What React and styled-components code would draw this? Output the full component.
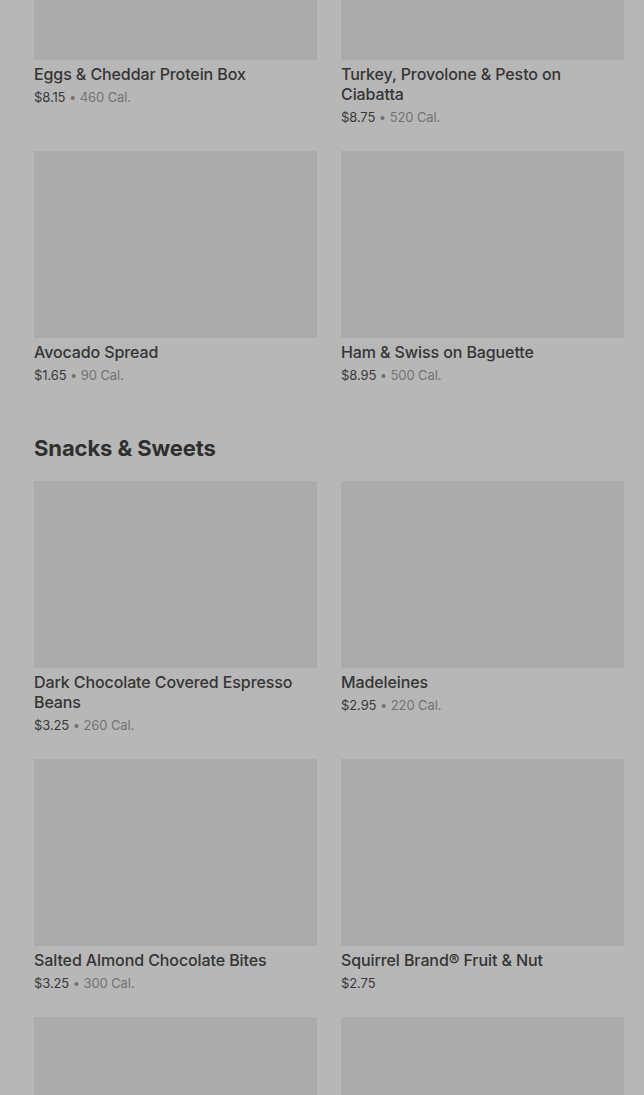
import React from "react";
import styled, { createGlobalStyle } from "styled-components";

const GlobalStyle = createGlobalStyle`
    html, body {
        margin: 0;
        padding: 0;
        background: #b7b7b7;
        overflow: hidden;
    }
    body {
        font-family: Inter, "Liberation Sans", Arial, sans-serif;
    }
`

const Page = styled.main`
    background: #b7b7b7;
    padding: 0 20px 0 34px;
    margin-top: -127px;
    height: 1222px;
    overflow: hidden;
`
const Section = styled.section`
    display: flex;
    flex-direction: column;
`
const SectionTitle = styled.h2`
    margin: 49px 0 19px;
    font-size: 22px;
    line-height: 28px;
    font-weight: 700;
    letter-spacing: -0.1px;
    color: #2f2f2f;
`
const Grid = styled.div`
    display: grid;
    grid-template-columns: 1fr 1fr;
    column-gap: 24px;
    row-gap: 24px;
`
const Card = styled.div`
    display: flex;
    flex-direction: column;
`
const Thumb = styled.div`
    height: 187px;
    background: #ababab;
    margin-bottom: 4px;
`
const Name = styled.div`
    font-size: 16px;
    line-height: 20px;
    font-weight: 500;
    letter-spacing: -0.1px;
    color: #353535;
`
const Meta = styled.div`
    margin-top: 3px;
    font-size: 13px;
    line-height: 20px;
    letter-spacing: -0.1px;
    color: #3a3a3a;
`
const Cal = styled.span`
    color: #737373;
`

const top = [
    { name: "Eggs & Cheddar Protein Box", price: "$8.15", cal: "460 Cal." },
    { name: "Turkey, Provolone & Pesto on Ciabatta", price: "$8.75", cal: "520 Cal." },
    { name: "Avocado Spread", price: "$1.65", cal: "90 Cal." },
    { name: "Ham & Swiss on Baguette", price: "$8.95", cal: "500 Cal." },
]

const snacks = [
    { name: "Dark Chocolate Covered Espresso Beans", price: "$3.25", cal: "260 Cal." },
    { name: "Madeleines", price: "$2.95", cal: "220 Cal." },
    { name: "Salted Almond Chocolate Bites", price: "$3.25", cal: "300 Cal." },
    { name: "Squirrel Brand® Fruit & Nut", price: "$2.75" },
    { id: "more-1" },
    { id: "more-2" },
]

const Item = ({ item }) => (
    <Card>
        <Thumb />
        {item.name && <Name>{item.name}</Name>}
        {item.price && (
            <Meta>
                {item.price}
                {item.cal && <Cal> • {item.cal}</Cal>}
            </Meta>
        )}
    </Card>
)

const App = () => {
    return (
        <>
            <GlobalStyle />
            <Page>
                <Section>
                    <Grid>
                        {top.map(i => <Item key={i.name} item={i} />)}
                    </Grid>
                </Section>
                <Section>
                    <SectionTitle>Snacks &amp; Sweets</SectionTitle>
                    <Grid>
                        {snacks.map(i => <Item key={i.name || i.id} item={i} />)}
                    </Grid>
                </Section>
            </Page>
        </>
    );
};

export default App;
